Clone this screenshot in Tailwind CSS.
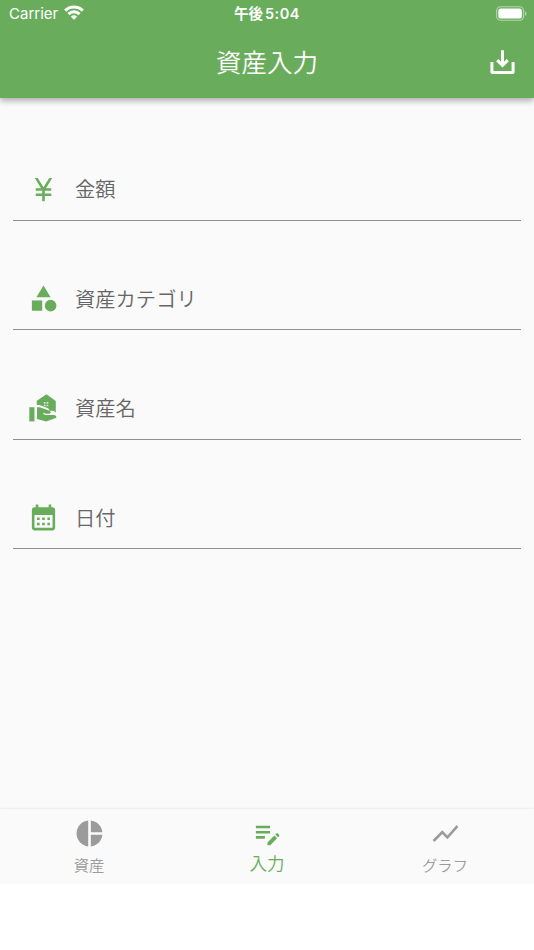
<!DOCTYPE html>
<html lang="ja">
<head>
    <meta charset="UTF-8">
    <meta name="viewport" content="width=device-width, initial-scale=1.0">
    <title>資産入力</title>
    <script src="https://cdn.jsdelivr.net/npm/@tailwindcss/browser@4"></script>
</head>
<body class="bg-white">
    <div class="flex flex-col w-[534px] h-[950px] overflow-hidden font-['Noto_Sans_CJK_JP',sans-serif] font-[350]">
        <header class="relative z-10 h-[98px] shrink-0 bg-[#69ad5c] text-white shadow-[0_3px_6px_rgba(0,0,0,0.3)]">
            <!-- Status bar -->
            <div class="grid grid-cols-3 h-[27px] items-center pl-[9px] pr-[7px]">
                <div class="flex items-center gap-[6px] font-['Inter',sans-serif] font-normal text-[15px] leading-[27px]">
                    <span>Carrier</span>
                    <svg class="w-[20px] h-[15px] -mt-[2px]" viewBox="0 0 20 15" fill="none" stroke="currentColor" stroke-width="3">
                        <path d="M1.2 5.6a12.6 12.6 0 0 1 17.6 0"/>
                        <path d="M4.5 9.1a7.9 7.9 0 0 1 11 0"/>
                        <path d="M10 14.8 6.9 11.7a4.5 4.5 0 0 1 6.2 0z" fill="currentColor" stroke="none"/>
                    </svg>
                </div>
                <div class="text-center whitespace-nowrap font-['Inter','Noto_Sans_CJK_JP',sans-serif] font-semibold text-[14.5px] leading-[27px] -ml-[2px]">午後<span class="ml-[2px] tracking-[0.5px]">5:04</span></div>
                <svg class="justify-self-end w-[31px] h-[15px]" viewBox="0 0 31 15">
                    <rect x="0.6" y="0.8" width="27" height="13.4" rx="4" fill="none" stroke="#fff" stroke-opacity="0.5" stroke-width="1.1"/>
                    <rect x="2.3" y="2.5" width="23.6" height="10" rx="2.6" fill="#fff"/>
                    <path d="M29 5.2c2 .8 2 3.8 0 4.6z" fill="#fff" fill-opacity="0.5"/>
                </svg>
            </div>
            <!-- App bar -->
            <div class="grid grid-cols-[60px_1fr_60px] h-[71px] items-center">
                <h1 class="col-start-2 text-center text-[25.5px] leading-[71px] -mt-[4px]">資産入力</h1>
                <button class="justify-self-end mr-[16px]" aria-label="保存">
                    <svg class="w-[31px] h-[31px]" viewBox="-3 -3 31 31" fill="none" stroke="currentColor" stroke-width="3">
                        <path d="M1.9 12v9.4q0 1.2 1.2 1.2h18.8q1.2 0 1.2-1.2V12"/>
                        <path d="M12.5 .2v15M7.2 10.1l5.3 5.3 5.300-5.300"/>
                    </svg>
                </button>
            </div>
        </header>

        <main class="flex flex-col h-[711px] shrink-0 bg-[#fafafa] px-[13px] pt-[13px] text-[20.3px] text-[#666666]">
            <div class="flex items-end h-[109.5px] border-b-[1.5px] border-[#8e8e8e]">
                <div class="flex items-center h-[62px] pl-[15px] gap-[16px]">
                    <svg class="w-[31px] h-[31px] mt-[1px] text-[#69ad5c]" viewBox="0 0 24 24" fill="currentColor"><path d="M13.92 11H18v2h-5v2h5v2h-5v4h-2v-4H6v-2h5v-2H6v-2h4.08L5.26 3h2.29L12 10.33 16.45 3h2.29z"/></svg>
                    <span class="leading-[30px] -mt-[1px]">金額</span>
                </div>
            </div>
            <div class="flex items-end h-[109.5px] border-b-[1.5px] border-[#8e8e8e]">
                <div class="flex items-center h-[62px] pl-[15px] gap-[16px]">
                    <svg class="w-[31px] h-[31px] mt-[1px] text-[#69ad5c]" viewBox="0 0 24 24" fill="currentColor"><path d="M12 2l-5.5 9h11z"/><circle cx="17.5" cy="17.5" r="4.5"/><path d="M3 13.5h8v8H3z"/></svg>
                    <span class="leading-[30px] -mt-[1px]">資産カテゴリ</span>
                </div>
            </div>
            <div class="flex items-end h-[109.5px] border-b-[1.5px] border-[#8e8e8e]">
                <div class="flex items-center h-[62px] pl-[15px] gap-[16px]">
                    <svg class="w-[31px] h-[31px] mt-[1px] text-[#69ad5c]" viewBox="0 0 24 24" fill="currentColor">
                        <path d="M1 11h4v11H1z"/>
                        <path d="M21.5 15.3V6.2L14.300 1 6.800 6v3.2h2l6.3 2.4c.9.4 1.5 1.2 1.5 2.2h2.2c1.2 0 2.1.6 2.7 1.5z"/>
                        <path d="M20 17h-6.2l-2.1-.8.3-.9 1.8.7h2.7c.6 0 1.1-.5 1.1-1.1 0-.5-.3-.9-.8-1.1L9 11H7v9.2l7 1.9 8-3c0-1.200-.8-2.100-2-2.100z"/>
                        <path d="M12.3 7h1.3v1.300h-1.300zM14.400 7h1.300v1.300h-1.300zM12.300 9h1.300v1.200h-1.300zM14.400 9h1.300v1.200h-1.300z" fill="#d5ead0"/>
                    </svg>
                    <span class="leading-[30px] -mt-[1px]">資産名</span>
                </div>
            </div>
            <div class="flex items-end h-[109.5px] border-b-[1.5px] border-[#8e8e8e]">
                <div class="flex items-center h-[62px] pl-[15px] gap-[16px]">
                    <svg class="w-[31px] h-[31px] mt-[1px] text-[#69ad5c]" viewBox="0 0 24 24" fill="currentColor"><path d="M19 4h-1V2h-2v2H8V2H6v2H5c-1.110 0-1.990.9-1.990 2L3 20c0 1.100.89 2 2 2h14c1.100 0 2-.9 2-2V6c0-1.100-.9-2-2-2zm0 16H5V10h14v10zM9 14H7v-2h2v2zm4 0h-2v-2h2v2zm4 0h-2v-2h2v2zm-8 4H7v-2h2v2zm4 0h-2v-2h2v2zm4 0h-2v-2h2v2z"/></svg>
                    <span class="leading-[30px] -mt-[1px]">日付</span>
                </div>
            </div>
        </main>

        <!-- Bottom navigation -->
        <nav class="relative grid grid-cols-3 h-[75px] shrink-0 bg-[#fafafa] text-[#9b9b9b] shadow-[0_-1px_2px_rgba(0,0,0,0.06)]">
            <a class="flex flex-col items-center pt-[9px]">
                <svg class="w-[31px] h-[31px]" viewBox="0 0 24 24" fill="currentColor"><path d="M11 2v20c-5.070-.5-9-4.790-9-10s3.930-9.500 9-10zm2.030 0v8.990H22c-.47-4.740-4.240-8.520-8.970-8.990zm0 11.010V22c4.740-.47 8.500-4.250 8.970-8.990h-8.970z"/></svg>
                <span class="text-[15.3px] leading-[22px] mt-[4px]">資産</span>
            </a>
            <a class="flex flex-col items-center pt-[9px] text-[#69ad5c]">
                <svg class="w-[31px] h-[31px]" viewBox="0 0 24 24" fill="currentColor"><path d="M3 10h11v2H3v-2zm0-2h11V6H3v2zm0 8h7v-2H3v2zm15.010-3.130.71-.71c.39-.39 1.020-.39 1.410 0l.71.71c.39.39.39 1.020 0 1.410l-.71.71-2.120-2.120zm-.71.71-5.300 5.300V21h2.120l5.300-5.300-2.120-2.120z"/></svg>
                <span class="text-[17.5px] leading-[24px] mt-[2px]">入力</span>
            </a>
            <a class="flex flex-col items-center pt-[9px]">
                <svg class="w-[31px] h-[31px]" viewBox="0 0 24 24" fill="currentColor"><path d="M3.500 18.490l6-6.010 4 4L22 6.920l-1.410-1.410-7.090 7.970-4-4L2 16.990z"/></svg>
                <span class="text-[15.3px] leading-[22px] mt-[4px]">グラフ</span>
            </a>
        </nav>
    </div>
</body>
</html>
